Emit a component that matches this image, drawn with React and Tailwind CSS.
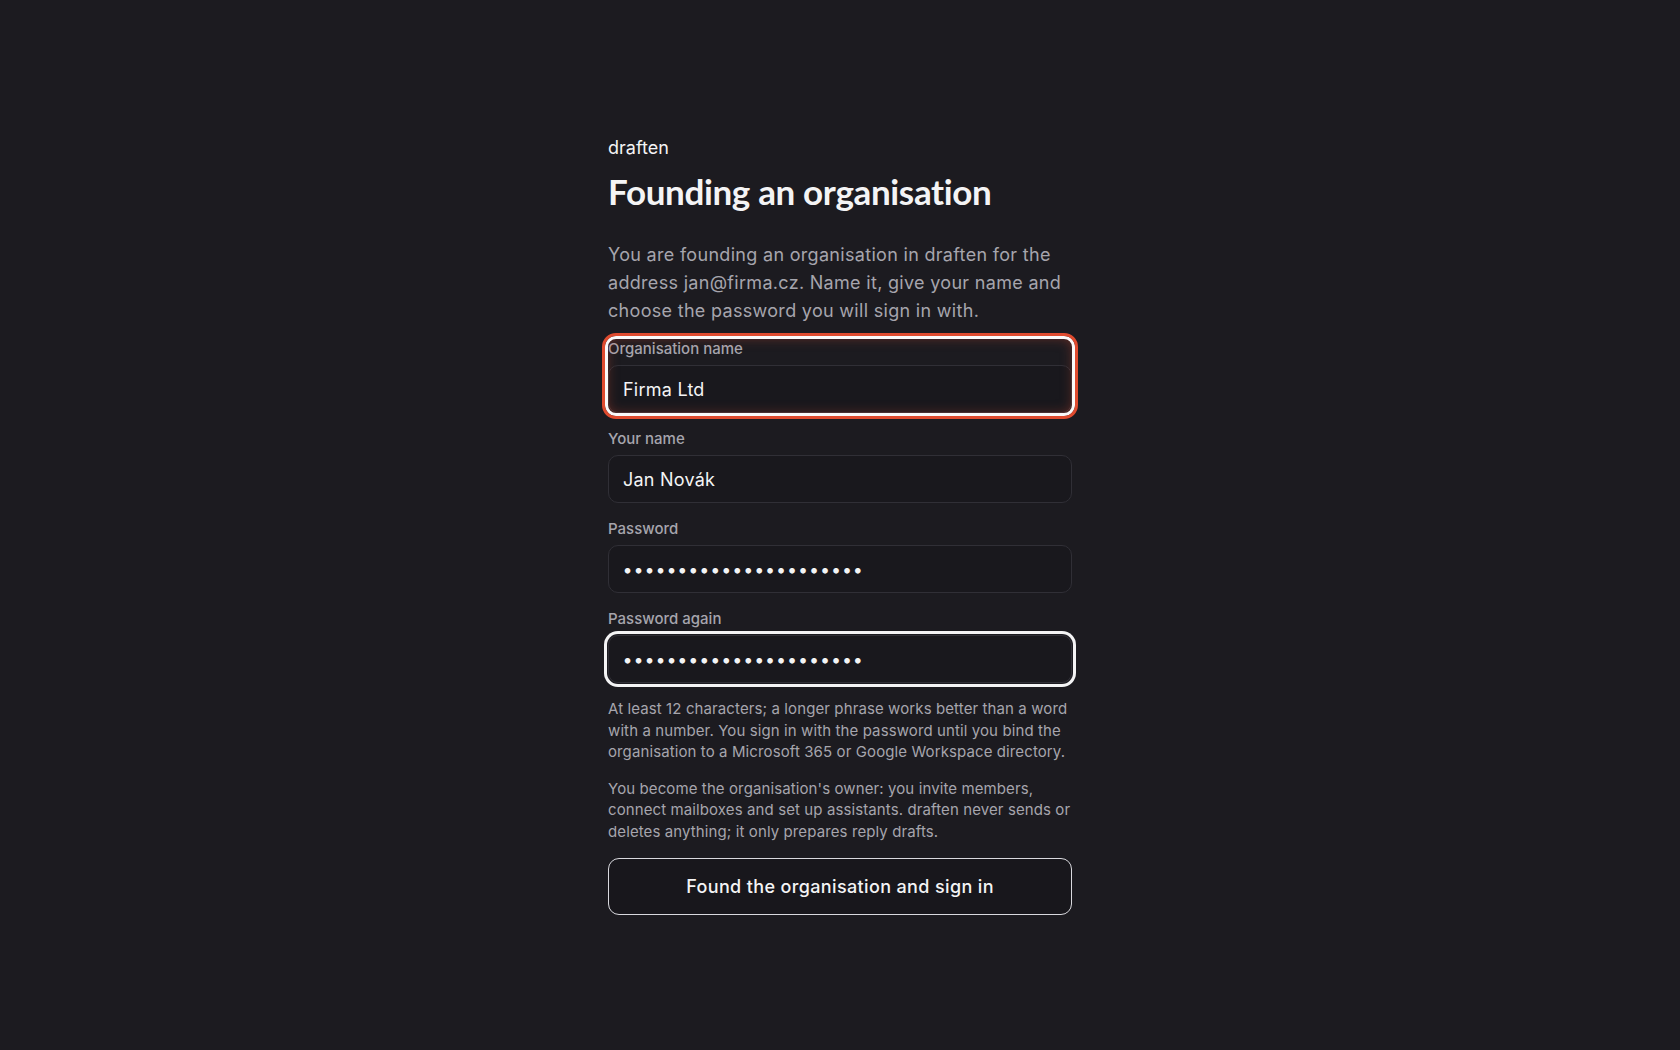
import { useState } from 'react';

const inputCls =
  'h-12 w-full rounded-[10px] border border-[#302f36] bg-[#19181d] px-3.5 text-[18px] text-[#f4f4f5] outline-none';

const Field = ({ label, children, highlight = false }) => (
  <div className="relative flex flex-col">
    <label className="mb-1.5 text-[15px] font-medium leading-5 text-[#a6a5ad]">{label}</label>
    {children}
    {highlight && (
      <div className="pointer-events-none absolute -inset-[6px] rounded-[14px] border-[3px] border-[#df4b2f] shadow-[inset_0_0_0_3px_#fafafa,inset_0_0_14px_rgba(223,75,47,0.5)]" />
    )}
  </div>
);

export default function App() {
  const [form, setForm] = useState({
    org: 'Firma Ltd',
    name: 'Jan Novák',
    password: 'correcthorsebatterysta',
    password2: 'correcthorsebatterysta',
  });

  return (
    <div className="min-h-screen bg-[#1c1b20] font-['Inter',sans-serif] text-[#f4f4f5]">
      <div className="mx-auto w-[464px] pt-[136px] pb-20">
        <div className="text-[18px] leading-6">draften</div>
        <h1 className="mt-[11px] font-['Lato',sans-serif] text-[35px] font-bold leading-10 tracking-[-0.01em]">
          Founding an organisation
        </h1>
        <p className="mt-[30px] text-[18px] leading-7 tracking-[0.017em] text-[#a6a5ad]">
          You are founding an organisation in draften for the address jan@firma.cz. Name it, give your name and
          choose the password you will sign in with.
        </p>

        <form className="mt-[14px] flex flex-col gap-4" onSubmit={(e) => e.preventDefault()}>
          <Field label="Organisation name" highlight>
            <input
              value={form.org}
              onChange={(e) => setForm({ ...form, org: e.target.value })}
              className={`${inputCls} tracking-[0.013em]`}
            />
          </Field>
          <Field label="Your name">
            <input
              value={form.name}
              onChange={(e) => setForm({ ...form, name: e.target.value })}
              className={`${inputCls} tracking-[0.013em]`}
            />
          </Field>
          <Field label="Password">
            <input
              type="password"
              value={form.password}
              onChange={(e) => setForm({ ...form, password: e.target.value })}
              className={`${inputCls} font-semibold tracking-[0.106em]`}
            />
          </Field>
          <Field label="Password again">
            <input
              type="password"
              value={form.password2}
              onChange={(e) => setForm({ ...form, password2: e.target.value })}
              className={`${inputCls} font-semibold tracking-[0.106em] shadow-[0_0_0_1px_#1c1b20,0_0_0_4px_#f4f4f5]`}
            />
          </Field>

          <div className="-mt-px text-[15px] leading-[21.5px] tracking-[0.007em] text-[#a6a5ad]">
            <p>
              At least 12 characters; a longer phrase works better than a word with a number. You sign in with the
              password until you bind the organisation to a Microsoft 365 or Google Workspace directory.
            </p>
            <p className="mt-[15px]">
              You become the organisation's owner: you invite members, connect mailboxes and set up assistants.
              draften never sends or deletes anything; it only prepares reply drafts.
            </p>
          </div>

          <button
            type="submit"
            className="h-[57px] w-full rounded-[11px] border-[1.5px] border-[#d9d9de] bg-[#18171c] text-[18px] font-medium tracking-[0.02em] text-[#f4f4f5]"
          >
            Found the organisation and sign in
          </button>
        </form>
      </div>
    </div>
  );
}
